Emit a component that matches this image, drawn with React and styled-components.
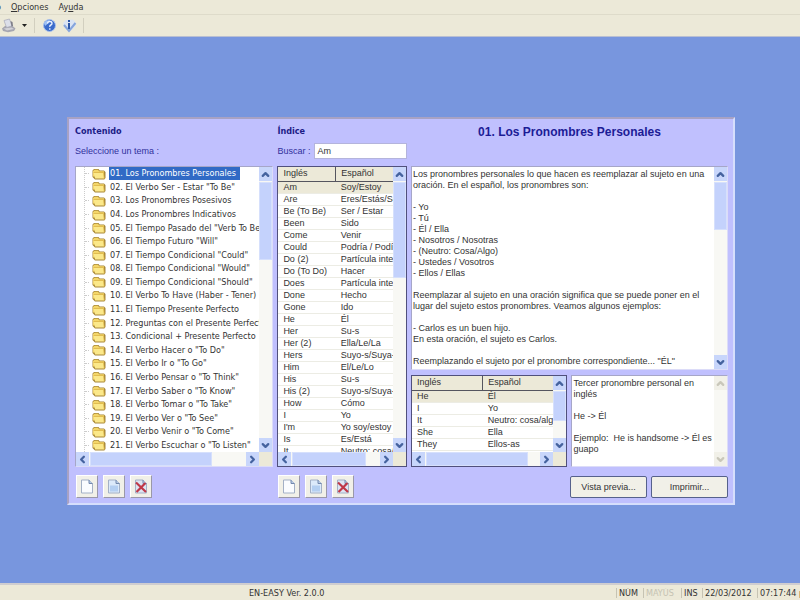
import styled, { createGlobalStyle, css } from "styled-components";
import { ChevronDown, ChevronLeft, ChevronRight, ChevronUp } from "lucide-react";

const topics = [
  "01. Los Pronombres Personales",
  '02. El Verbo Ser - Estar "To Be"',
  "03. Los Pronombres Posesivos",
  "04. Los Pronombres Indicativos",
  '05. El Tiempo Pasado del "Verb To Be"',
  '06. El Tiempo Futuro "Will"',
  '07. El Tiempo Condicional "Could"',
  '08. El Tiempo Condicional "Would"',
  '09. El Tiempo Condicional "Should"',
  "10. El Verbo To Have (Haber - Tener)",
  "11. El Tiempo Presente Perfecto",
  "12. Preguntas con el Presente Perfecto",
  "13. Condicional + Presente Perfecto",
  '14. El Verbo Hacer o "To Do"',
  '15. El Verbo Ir o "To Go"',
  '16. El Verbo Pensar o "To Think"',
  '17. El Verbo Saber o "To Know"',
  '18. El Verbo Tomar o "To Take"',
  '19. El Verbo Ver o "To See"',
  '20. El Verbo Venir o "To Come"',
  '21. El Verbo Escuchar o "To Listen"',
];

const words = [
  ["Am", "Soy/Estoy"],
  ["Are", "Eres/Estás/Son"],
  ["Be (To Be)", "Ser / Estar"],
  ["Been", "Sido"],
  ["Come", "Venir"],
  ["Could", "Podría / Podía"],
  ["Do (2)", "Partícula interrogativa"],
  ["Do (To Do)", "Hacer"],
  ["Does", "Partícula interrogativa"],
  ["Done", "Hecho"],
  ["Gone", "Ido"],
  ["He", "Él"],
  ["Her", "Su-s"],
  ["Her (2)", "Ella/Le/La"],
  ["Hers", "Suyo-s/Suya-s"],
  ["Him", "El/Le/Lo"],
  ["His", "Su-s"],
  ["His (2)", "Suyo-s/Suya-s"],
  ["How", "Cómo"],
  ["I", "Yo"],
  ["I'm", "Yo soy/estoy"],
  ["Is", "Es/Está"],
  ["It", "Neutro: cosa/algo"],
];

const pronouns = [
  ["He", "Él"],
  ["I", "Yo"],
  ["It", "Neutro: cosa/algo"],
  ["She", "Ella"],
  ["They", "Ellos-as"],
];

const lesson = `Los pronombres personales lo que hacen es reemplazar al sujeto en una oración. En el español, los pronombres son:

- Yo
- Tú
- Él / Ella
- Nosotros / Nosotras
- (Neutro: Cosa/Algo)
- Ustedes / Vosotros
- Ellos / Ellas

Reemplazar al sujeto en una oración significa que se puede poner en el lugar del sujeto estos pronombres. Veamos algunos ejemplos:

- Carlos es un buen hijo.
En esta oración, el sujeto es Carlos.

Reemplazando el sujeto por el pronombre correspondiente... "ÉL"`;

const meaning = `Tercer pronombre personal en inglés

He -> Él

Ejemplo:  He is handsome -> Él es guapo`;

function App() {
  return (
    <Screen>
      <GlobalStyle />
      <MenuBar>
        <MenuItem $cut>o</MenuItem>
        <MenuItem>
          <u>O</u>pciones
        </MenuItem>
        <MenuItem>
          Ay<u>u</u>da
        </MenuItem>
      </MenuBar>
      <ToolBar>
        <ToolButton aria-label="Usuario">
          <UserIcon />
        </ToolButton>
        <ToolButton aria-label="Más" $small>
          <svg width="5" height="3" viewBox="0 0 5 3">
            <path d="M0 0h5L2.500 3z" fill="#222" />
          </svg>
        </ToolButton>
        <Divider />
        <ToolButton aria-label="Ayuda">
          <HelpIcon />
        </ToolButton>
        <ToolButton aria-label="Acerca de">
          <InfoIcon />
        </ToolButton>
        <Divider />
      </ToolBar>

      <Workspace>
        <Dialog>
          <Column>
            <Head>
              <Heading>Contenido</Heading>
              <Caption>Seleccione un tema :</Caption>
            </Head>
            <Box $height={301}>
              <BoxRow>
                <Tree>
                  {topics.map((topic, i) => (
                    <Topic key={topic}>
                      <FolderIcon />
                      <TopicName $active={i === 0}>{topic}</TopicName>
                    </Topic>
                  ))}
                </Tree>
                <ScrollBar size={78} />
              </BoxRow>
              <HorizontalBar size={122} />
            </Box>
            <Actions />
          </Column>

          <Column>
            <Head>
              <Heading>Índice</Heading>
              <SearchRow>
                <Caption as="label" htmlFor="search">
                  Buscar :
                </Caption>
                <Search id="search" defaultValue="Am" />
              </SearchRow>
            </Head>
            <Box $height={301} $dark>
              <BoxRow>
                <WordTable rows={words} />
                <ScrollBar size={96} />
              </BoxRow>
              <HorizontalBar size={74} />
            </Box>
            <Actions />
          </Column>

          <Column>
            <Head>
              <LessonTitle>01. Los Pronombres Personales</LessonTitle>
            </Head>
            <Box $height={204}>
              <BoxRow>
                <Text readOnly aria-label="Lección" defaultValue={lesson} />
                <ScrollBar size={48} />
              </BoxRow>
            </Box>
            <Pair>
              <Box $height={92} $dark>
                <BoxRow>
                  <WordTable rows={pronouns} />
                  <ScrollBar size={30} />
                </BoxRow>
                <HorizontalBar size={102} />
              </Box>
              <Box $height={92}>
                <BoxRow>
                  <Text readOnly aria-label="Significado" defaultValue={meaning} />
                  <ScrollBar disabled />
                </BoxRow>
              </Box>
            </Pair>
            <Footer>
              <PushButton>Vista previa...</PushButton>
              <PushButton>Imprimir...</PushButton>
            </Footer>
          </Column>
        </Dialog>
      </Workspace>

      <StatusBar>
        <StatusTitle>EN-EASY Ver. 2.0.0</StatusTitle>
        <StatusCell $width={26}>NÚM</StatusCell>
        <StatusCell $width={37} $off>
          MAYÚS
        </StatusCell>
        <StatusCell $width={20}>INS</StatusCell>
        <StatusCell $width={54}>22/03/2012</StatusCell>
        <StatusCell $width={43}>07:17:44 p.m.</StatusCell>
      </StatusBar>
    </Screen>
  );
}

function WordTable({ rows }) {
  return (
    <TableArea>
      <Table>
        <thead>
          <tr>
            <th>Inglés</th>
            <th>Español</th>
          </tr>
        </thead>
        <tbody>
          {rows.map(([english, spanish]) => (
            <tr key={english}>
              <td>{english}</td>
              <td>{spanish}</td>
            </tr>
          ))}
        </tbody>
      </Table>
    </TableArea>
  );
}

function ScrollBar({ size, disabled }) {
  return (
    <Bar>
      <Arrow aria-label="Arriba" disabled={disabled}>
        <ChevronUp size={11} strokeWidth={5} />
      </Arrow>
      {size && <Thumb style={{ height: size }} />}
      <Arrow aria-label="Abajo" disabled={disabled} $end>
        <ChevronDown size={11} strokeWidth={5} />
      </Arrow>
    </Bar>
  );
}

function HorizontalBar({ size }) {
  return (
    <Bar $horizontal>
      <Arrow aria-label="Izquierda">
        <ChevronLeft size={11} strokeWidth={5} />
      </Arrow>
      <Thumb style={{ width: size }} />
      <Arrow aria-label="Derecha" $end>
        <ChevronRight size={11} strokeWidth={5} />
      </Arrow>
    </Bar>
  );
}

function Actions() {
  return (
    <ActionRow>
      <IconButton aria-label="Nuevo">
        <PageIcon />
      </IconButton>
      <IconButton aria-label="Editar">
        <PageIcon lined />
      </IconButton>
      <IconButton aria-label="Eliminar">
        <DeleteIcon />
      </IconButton>
    </ActionRow>
  );
}

function FolderIcon() {
  return (
    <svg width="14" height="12" viewBox="0 0 14 12">
      <path d="M.5 9V2.500L2 1h4.500l1.200 1.500H12L13.500 4v6L12.300 11.500H3z" fill="#a8883a" />
      <path d="M1 8.500V3l1.500-1.200h3.500L7.200 3.200H12V9z" fill="#f3d568" />
      <path d="M1.500 4.500h10l.8 6H3.200z" fill="#fbe88a" />
      <path d="M1.500 4.500h10l.8 6" fill="none" stroke="#d7ae3e" strokeWidth=".7" />
    </svg>
  );
}

function PageIcon({ lined }) {
  return (
    <svg width="14" height="15" viewBox="0 0 14 15">
      <path d="M1.500 1h7.500l3.500 3.500V14h-11z" fill={lined ? "#dceafa" : "#fafcff"} stroke="#a3b0c6" />
      <path d="M9 1v3.500h3.500" fill="#b9cbe6" stroke="#7389ad" />
      {lined && <path d="M3 6.500h8v6H3z" fill="#b4cff1" />}
    </svg>
  );
}

function DeleteIcon() {
  return (
    <svg width="14" height="15" viewBox="0 0 14 15">
      <path d="M1.500 1h7.500l3.500 3.500V14h-11z" fill="#dde5f3" stroke="#a3b0c6" />
      <path d="M9 1v3.500h3.500" fill="#b9cbe6" stroke="#7389ad" />
      <path d="M2 3.500l10 9.500M11.500 4L2.500 13" fill="none" stroke="#bf3848" strokeWidth="2.200" />
    </svg>
  );
}

function UserIcon() {
  return (
    <svg width="15" height="15" viewBox="0 0 15 15">
      <path d="M1 10.500L4 8l7-.5 3.500 3-1.500 2.500-6 1.300-5-1.300z" fill="#a6a6b0" />
      <path d="M3 2.500L8.500 1 11 8l-5.500 1.500z" fill="#dcdfe9" stroke="#a6a8b8" strokeWidth=".7" />
      <path d="M2.500 10.500l8-1 2.500 1.500-7 1.500z" fill="#d2d2d8" />
      <path d="M9.500 3l2 1 .5 4-1.500.5z" fill="#7d7d88" />
    </svg>
  );
}

function HelpIcon() {
  return (
    <svg width="15" height="15" viewBox="0 0 15 15">
      <circle cx="7.500" cy="7.500" r="6" fill="#3a6bcb" stroke="#a9c1ed" />
      <path d="M2 5Q4 2 8 2L6 5.500 3 8z" fill="#9ec1f5" />
      <path d="M5.500 5.500q.2-2 2.300-2t2.200 1.700q0 1.200-1.200 1.800T7.800 8.900M7.800 10.200v1.500" fill="none" stroke="#e8f0ff" strokeWidth="1.400" />
    </svg>
  );
}

function InfoIcon() {
  return (
    <svg width="15" height="15" viewBox="0 0 15 15">
      <path d="M1 5l3-3 7-.5L14 5l-1 4-5.500 5L2 9z" fill="#dbe4f3" />
      <path d="M2 7l5 6 6.500-8" fill="none" stroke="#86a5dc" strokeWidth="2" />
      <path d="M7 2v2M7 5v6" fill="none" stroke="#2f58a8" strokeWidth="2" />
    </svg>
  );
}

const GlobalStyle = createGlobalStyle`
  * {
    box-sizing: border-box;
  }

  body {
    margin: 0;
    overflow: hidden;
    font-family: "DejaVu Sans Condensed", "DejaVu Sans", sans-serif;
    font-size: 9px;
    color: #333;
  }

  button, input, textarea {
    padding: 0;
    border: 0;
    border-radius: 0;
    background: none;
    color: inherit;
    font: inherit;
  }

  svg {
    display: block;
    flex: none;
  }
`;

const sans = css`
  font-family: "Liberation Sans", Arial, sans-serif;
  font-size: 9px;
`;

const Screen = styled.div`
  display: flex;
  flex-direction: column;
  min-height: 100vh;
  background: #7896de;
`;

const MenuBar = styled.nav`
  display: flex;
  gap: 10px;
  height: 15px;
  overflow: hidden;
  background: #ece9d8;
  border-bottom: 1px solid #dedbca;
`;

const MenuItem = styled.button`
  line-height: 12px;
  margin-left: ${({ $cut }) => ($cut ? "-4px" : "0")};
`;

const ToolBar = styled.div`
  display: flex;
  align-items: center;
  gap: 4px;
  height: 22px;
  background: #ece9d8;
  border-bottom: 1px solid #b9bfd2;
`;

const ToolButton = styled.button`
  display: flex;
  justify-content: center;
  width: ${({ $small }) => ($small ? "8px" : "16px")};
`;

const Divider = styled.span`
  width: 1px;
  height: 15px;
  margin: 0 2px;
  background: #d2cfbf;
`;

const Workspace = styled.main`
  flex: 1;
  padding: 80px 65px 60px 67px;
`;

const Dialog = styled.section`
  display: grid;
  grid-template-columns: 199fr 130fr 318fr;
  column-gap: 4px;
  padding: 6px 5px 5px 6px;
  background: #c0c0fe;
  border: 2px solid #a8a2c4;
  border-right-color: #d6defc;
  border-bottom-color: #d6defc;
`;

const Column = styled.div`
  display: flex;
  flex-direction: column;
  min-width: 0;
`;

const Head = styled.header`
  height: 41px;
`;

const Heading = styled.h2`
  margin: 0 0 6px;
  font-size: 9px;
  line-height: 12px;
  color: #1c1c86;
`;

const Caption = styled.p`
  ${sans}
  margin: 0;
  line-height: 16px;
  color: #30309c;
`;

const SearchRow = styled.div`
  display: flex;
  gap: 4px;
`;

const Search = styled.input`
  ${sans}
  flex: 1;
  min-width: 0;
  height: 16px;
  padding: 0 2px;
  background: #fff;
  border: 1px solid #b4b4dc;
`;

const LessonTitle = styled.h1`
  margin: 0;
  font-family: "Liberation Sans", Arial, sans-serif;
  font-size: 12px;
  line-height: 15px;
  text-align: center;
  color: #1c1c96;
`;

const Box = styled.div`
  display: flex;
  flex-direction: column;
  min-width: 0;
  height: ${({ $height }) => $height}px;
  overflow: hidden;
  background: #fff;
  border: 1px solid ${({ $dark }) => ($dark ? "#50507c" : "#a6a6c8")};
  ${({ $dark }) =>
    !$dark &&
    css`
      border-right-color: #dcdcf8;
      border-bottom-color: #dcdcf8;
    `}
`;

const BoxRow = styled.div`
  display: flex;
  flex: 1;
  min-height: 0;
`;

const Tree = styled.ul`
  display: flex;
  flex: 1;
  flex-direction: column;
  min-width: 0;
  margin: 0 0 0 8px;
  padding: 0;
  overflow: hidden;
  list-style: none;
  border-left: 1px dotted #ccc;
`;

const Topic = styled.li`
  display: flex;
  flex: 1;
  align-items: center;
  min-height: 0;
  gap: 3px;
  white-space: nowrap;

  &::before {
    content: "";
    flex: none;
    width: 4px;
    border-top: 1px dotted #ccc;
  }
`;

const TopicName = styled.span`
  padding: 0 4px 0 1px;
  line-height: 13px;
  color: ${({ $active }) => ($active ? "#fff" : "inherit")};
  background: ${({ $active }) => ($active ? "#316ac5" : "none")};
`;

const TableArea = styled.div`
  flex: 1;
  min-width: 0;
  overflow: hidden;
`;

const Table = styled.table`
  ${sans}
  width: 100%;
  table-layout: fixed;
  border-collapse: collapse;
  line-height: 11px;
  text-align: left;

  th, td {
    height: 12px;
    padding: 0 0 0 5px;
    overflow: hidden;
    font-weight: 400;
    white-space: nowrap;
    border-bottom: 1px solid #ecece4;
  }

  th {
    height: 14px;
    background: #ece9d8;
    border-bottom: 1px solid #55555f;
  }

  th + th {
    border-left: 1px solid #55555f;
  }

  tbody tr:first-child {
    background: #ece9d8;
  }
`;

const Text = styled.textarea`
  ${sans}
  flex: 1;
  min-width: 0;
  padding: 2px 1px;
  overflow: hidden;
  line-height: 11px;
  resize: none;
  outline: 0;
`;

const Bar = styled.div`
  display: flex;
  flex: none;
  flex-direction: ${({ $horizontal }) => ($horizontal ? "row" : "column")};
  ${({ $horizontal }) =>
    $horizontal
      ? css`
          height: 14px;
          border-right: 13px solid #ece9d8;
        `
      : css`
          width: 13px;
        `}
  gap: 1px;
  background: #f8f8f4;
`;

const Arrow = styled.button`
  display: flex;
  flex: none;
  align-items: center;
  justify-content: center;
  width: 13px;
  height: 14px;
  margin: ${({ $end }) => ($end ? "auto 0 0 auto" : "0")};
  color: #45639f;
  background: #c8d6fb;

  &:disabled {
    color: #c9c7ba;
    background: #f1f0e8;
  }
`;

const Thumb = styled.div`
  flex: none;
  background: #c4d2fc;
  border: 1px solid #d6e0fc;
`;

const ActionRow = styled.div`
  display: flex;
  gap: 5px;
  padding: 8px 0 0 1px;
`;

const raised = css`
  display: flex;
  align-items: center;
  justify-content: center;
  background: #f1f0e8;
`;

const IconButton = styled.button`
  ${raised}
  width: 22px;
  height: 23px;
  border: 1px solid #fff;
  border-right-color: #9a98a8;
  border-bottom-color: #9a98a8;
`;

const Pair = styled.div`
  display: grid;
  grid-template-columns: 1fr 1fr;
  gap: 4px;
  margin-top: 5px;
`;

const Footer = styled.div`
  display: grid;
  grid-template-columns: 77px 77px;
  justify-content: end;
  gap: 4px;
  padding-top: 9px;
`;

const PushButton = styled.button`
  ${raised}
  ${sans}
  height: 22px;
  border: 1px solid #56618c;
  border-radius: 2px;
`;

const StatusBar = styled.footer`
  display: flex;
  align-items: center;
  gap: 1px;
  height: 17px;
  overflow: hidden;
  background: #ece9d8;
  border-top: 2px solid #cfcdd0;
`;

const StatusTitle = styled.span`
  flex: 1;
  padding-left: 249px;
`;

const StatusCell = styled.span`
  flex: none;
  width: ${({ $width }) => $width}px;
  padding-left: 2px;
  overflow: hidden;
  white-space: nowrap;
  border-left: 1px solid #c6c3b3;
  color: ${({ $off }) => ($off ? "#c5c2b2" : "inherit")};
`;

export default App;
